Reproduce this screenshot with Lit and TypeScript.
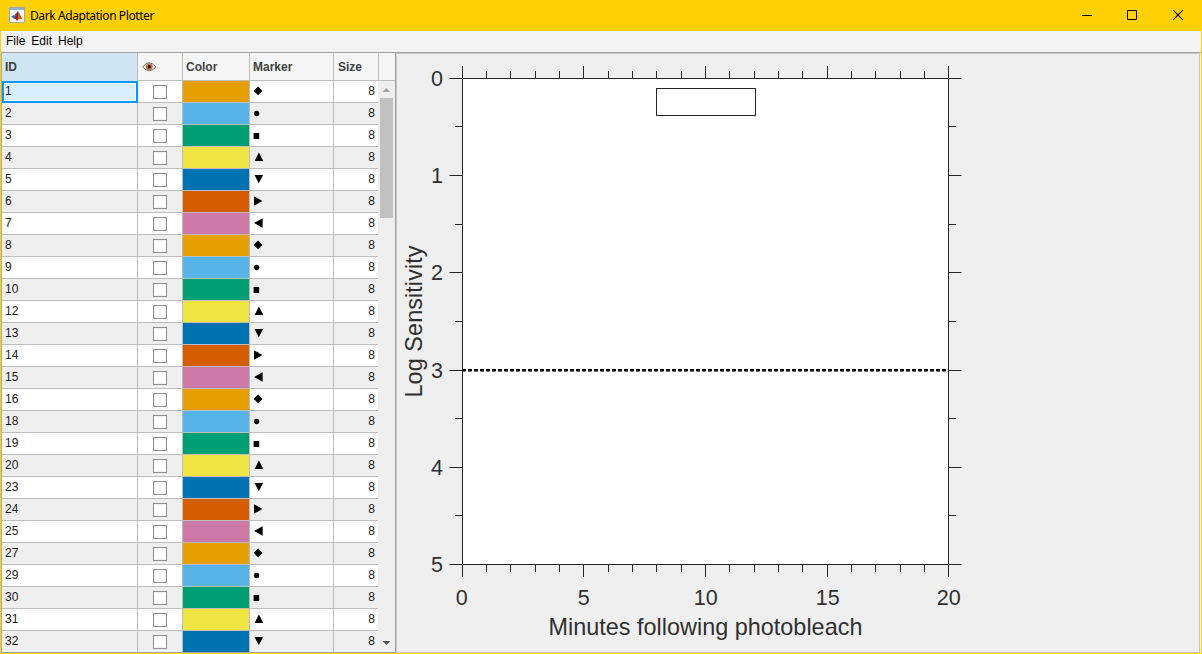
import { LitElement, html, css, svg } from "lit";
import { customElement } from "lit/decorators.js";
import { classMap } from "lit/directives/class-map.js";

const IDS = [1, 2, 3, 4, 5, 6, 7, 8, 9, 10, 12, 13, 14, 15, 16, 18, 19, 20, 23, 24, 25, 27, 29, 30, 31, 32];
const COLORS = ["#e69f00", "#56b4e9", "#009e73", "#f0e442", "#0072b2", "#d55e00", "#cc79a7"];
const MARKERS = [
  svg`<path d="M8.1 5.5L12.5 9.9L8.1 14.3L3.7 9.9Z"/>`,
  svg`<circle cx="6.6" cy="10.5" r="2.7"/>`,
  svg`<path d="M3.6 8H9.2V14H3.6Z"/>`,
  svg`<path d="M8.9 5.4L13.2 14H4.6Z"/>`,
  svg`<path d="M8.8 14.3L13.1 6H4.5Z"/>`,
  svg`<path d="M4 5.3L12.5 10L4 14.7Z"/>`,
  svg`<path d="M12.6 5.3L4 10L12.6 14.7Z"/>`,
];

@customElement("data-table")
class DataTable extends LitElement {
  static styles = css`
    :host { display: block; box-sizing: border-box; width: 395px; height: 600px; background: #efefef;
      border-left: 1px solid #a9a9a9; border-right: 1px solid #a0a0a0; border-bottom: 1px solid #a6a6a6;
      font: 12px/21px "Liberation Sans", Arial, sans-serif; color: #1a1a1a; overflow: hidden; }
    .head { display: grid; grid-template-columns: 136px 45px 67px 84px 45px 1fr; height: 28px; box-sizing: border-box;
      border-bottom: 1px solid #bdbdbd; background: #f5f5f5; font-weight: bold; color: #404040; line-height: 28px; }
    .head div { border-right: 1px solid #bdbdbd; padding-left: 3px; }
    .head div:last-child { border: 0; }
    .head .id { background: #d0e6f5; }
    .head .eye { display: flex; align-items: center; padding-left: 4px; }
    .head .size { padding-left: 4px; }
    .body { display: flex; }
    .rows { width: 376px; }
    .row { display: grid; grid-template-columns: 136px 45px 67px 84px 44px; height: 22px; background: #efefef; }
    .row.odd { background: #fff; }
    .row > div { box-sizing: border-box; border-right: 1px solid #bdbdbd; border-bottom: 1px solid #bdbdbd; }
    .row .id { padding-left: 3px; line-height: 20px; }
    .row .id.sel { background: #d9efff; border: 2px solid #0099ff; box-shadow: inset 0 0 0 1px #fff; padding-left: 1px; line-height: 16px; }
    .row .check { display: flex; justify-content: center; padding-top: 4px; }
    .box { box-sizing: border-box; width: 14px; height: 14px; border: 1px solid #8f8f8f; background: #fff; box-shadow: inset 0 0 1px #bbb; }
    .row .size { border-right: 0; text-align: right; padding-right: 3px; line-height: 20px; }
    svg { display: block; }
    .scroll { width: 17px; height: 571px; display: flex; flex-direction: column; align-items: center; }
    .arrow { width: 17px; height: 17px; flex: none; }
    .thumb { width: 13px; height: 120px; background: #c1c1c1; }
    .gap { flex: 1; }
  `;
  render() {
    return html`
      <div class="head">
        <div class="id">ID</div>
        <div class="eye"><svg width="15" height="12" viewBox="0 0 15 12">
          <path d="M.7 6Q7 -2.6 14 6Q7 13.6 .7 6Z" fill="#fafafa" stroke="#6c6c6c" stroke-width="1"/>
          <circle cx="7.3" cy="5.8" r="3.5" fill="#c9764f"/><circle cx="7.3" cy="5.8" r="1.7" fill="#301810"/>
        </svg></div>
        <div>Color</div><div>Marker</div><div class="size">Size</div><div></div>
      </div>
      <div class="body">
        <div class="rows">${IDS.map((id, i) => html`
          <div class=${classMap({ row: true, odd: i % 2 === 0 })}>
            <div class=${classMap({ id: true, sel: i === 0 })}>${id}</div>
            <div class="check"><span class="box"></span></div>
            <div style="background:${COLORS[i % 7]}"></div>
            <div><svg width="20" height="20">${MARKERS[i % 7]}</svg></div>
            <div class="size">8</div>
          </div>`)}
        </div>
        <div class="scroll">
          <svg class="arrow"><path d="M4.6 11L8.4 7L12.2 11Z" fill="#a0a0a0"/></svg>
          <div class="thumb"></div><div class="gap"></div>
          <svg class="arrow"><path d="M4.6 6L8.4 10L12.2 6Z" fill="#4d4d4d"/></svg>
        </div>
      </div>`;
  }
}

@customElement("sensitivity-plot")
class SensitivityPlot extends LitElement {
  static styles = css`
    :host { display: block; box-sizing: border-box; flex: 1; height: 600px; background: #efefef;
      border: 1px solid #c6c6cb; }
    svg { display: block; }
    text { font-family: "Liberation Sans", Arial, sans-serif; fill: #303030; }
    .tick { font-size: 21.5px; }
    .label { font-size: 23.4px; }
    .line { fill: #262626; }
  `;
  render() {
    const xs = Array.from({ length: 21 }, (_, i) => Math.floor(462.1 + 24.33 * i));
    const ys = Array.from({ length: 11 }, (_, i) => Math.floor(78.1 + 48.65 * i));
    return html`<svg width="802" height="598" viewBox="397 54 802 598">
      <rect x="462" y="78" width="487" height="487" fill="#fff"/>
      <g class="line">
        <rect x="462" y="78" width="487" height="1"/><rect x="462" y="564" width="487" height="1"/>
        <rect x="462" y="78" width="1" height="487"/><rect x="948" y="78" width="1" height="487"/>
        ${xs.map((x, i) => {
          const n = i % 5 ? 7 : 12;
          return svg`<rect x=${x} y=${78 - n} width="1" height=${n}/><rect x=${x} y="565" width="1" height=${n}/>`;
        })}
        ${ys.map((y, i) => {
          const n = i % 2 ? 7 : 12.5;
          return svg`<rect x=${462 - n} y=${y} width=${n} height="1"/><rect x="949" y=${y} width=${n} height="1"/>`;
        })}
      </g>
      <rect x="656.5" y="88.5" width="99" height="27" fill="#fff" stroke="#262626"/>
      <path d="M462 370.3H948" stroke="#000" stroke-width="2.6" stroke-dasharray="4 2"/>
      ${[0, 1, 2, 3, 4, 5].map((n) => svg`<text class="tick" x="443" y=${ys[n * 2] + 8} text-anchor="end">${n}</text>`)}
      ${[0, 5, 10, 15, 20].map((n) => svg`<text class="tick" x=${xs[n] + (n ? 0.7 : -0.3)} y="605" text-anchor="middle">${n}</text>`)}
      <text class="label" x="548.4" y="635" textLength="314">Minutes following photobleach</text>
      <text class="label" transform="translate(422 397.5) rotate(-90)" textLength="152">Log Sensitivity</text>
    </svg>`;
  }
}

@customElement("app-root")
class AppRoot extends LitElement {
  static styles = css`
    :host { display: block; box-sizing: border-box; width: 1202px; height: 654px; background: #ffd105;
      padding: 0 1px 1px; overflow: hidden; font-family: "Liberation Sans", Arial, sans-serif; }
    .title { height: 31px; display: flex; align-items: flex-start; padding-left: 8px; box-sizing: border-box; }
    .title span { font: 12px/31px "Noto Sans", sans-serif; letter-spacing: -.41px; margin-left: 5px; flex: 1; color: #000; }
    .logo { margin-top: 7px; }
    .menu { height: 22px; box-sizing: border-box; border-bottom: 1px solid #a0a0a0; background: #f3f3f3;
      display: flex; gap: 6px; padding-left: 5px; font-size: 12px; line-height: 20px; color: #000; }
    .main { display: flex; height: 600px; background: #f3f3f3; padding-right: 1px; }
    svg { display: block; }
  `;
  render() {
    return html`
      <div class="title">
        <svg class="logo" width="16" height="16" viewBox="0 0 16 16">
          <path d="M.5.5H15.5V15.5H.5Z" fill="#f4f6f8" stroke="#9aa6b0"/>
          <path d="M1 1H15V3H1Z" fill="#8eb4d2"/>
          <path d="M2 9.5L5.5 8L9 4L7.5 10L5 11.8Z" fill="#3a6f9f"/>
          <path d="M9 4C10.7 6 11.8 10.5 14 12.4C11.5 11 10.2 11.5 8 14C7.5 12.3 6.5 11.4 5 11.8C7 10.3 7.6 7 9 4Z" fill="#d65322"/>
          <path d="M9 4C9.1 8 9.1 11 8 14C7.5 12.3 6.5 11.4 5 11.8C7 10.3 7.6 7 9 4Z" fill="#7b2621"/>
        </svg>
        <span>Dark Adaptation Plotter</span>
        <svg width="120" height="30" viewBox="1081 0 120 30">
          <path d="M1082 15.5H1092M1127.5 10.5H1136.5V19.5H1127.5Z" fill="none" stroke="#000"/>
          <path d="M1173.2 10.2L1182.8 19.8M1182.8 10.2L1173.2 19.8" stroke="#000" stroke-width="1.1"/>
        </svg>
      </div>
      <div class="menu"><span>File</span><span>Edit</span><span>Help</span></div>
      <div class="main"><data-table></data-table><sensitivity-plot></sensitivity-plot></div>`;
  }
}
